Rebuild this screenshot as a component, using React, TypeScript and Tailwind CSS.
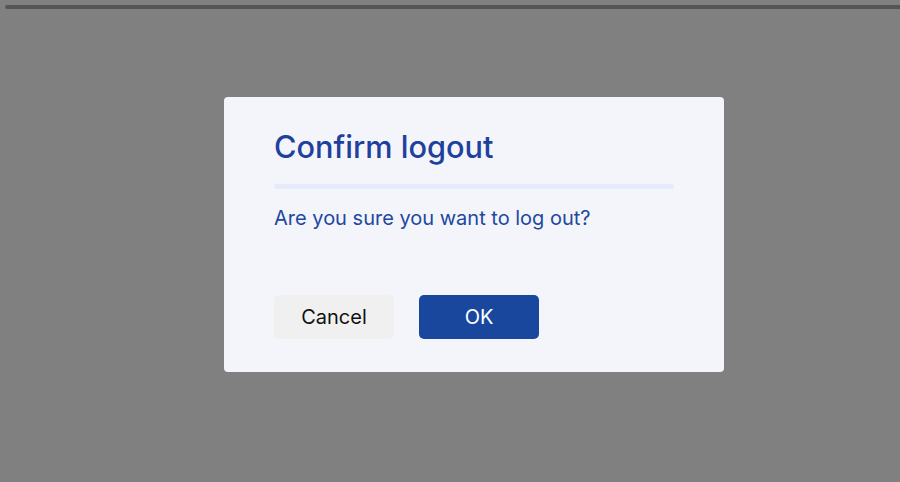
export default function App() {
  return (
    <div className="relative w-[900px] h-[482px] bg-[#808080] overflow-hidden" style={{ fontFamily: "Inter, 'Noto Sans', sans-serif" }}>
      <div className="absolute left-[5px] right-0 top-[5px] h-[4px] bg-[#555555] rounded-l-[2px]" />
      <div className="flex pt-[97px] pl-[224px]">
        <div className="w-[500px] h-[275px] bg-[#f4f5fb] rounded-[4px] px-[50px] pt-[30px]">
          <h2 className="text-[30.7px] leading-[40px] font-medium text-[#1d419c]">Confirm logout</h2>
          <div className="mt-[17px] h-[5px] rounded-full bg-[#e5ebf8]" />
          <p className="mt-[15px] text-[20px] leading-[28px] text-[#2148a0]">Are you sure you want to log out?</p>
          <div className="mt-[63px] flex gap-[25px]">
            <button className="w-[120px] h-[44px] rounded-[5px] bg-[#f0f0f0] text-[20px] text-[#111]">Cancel</button>
            <button className="w-[120px] h-[44px] rounded-[5px] bg-[#1a479e] text-[20px] text-white">OK</button>
          </div>
        </div>
      </div>
    </div>
  );
}
